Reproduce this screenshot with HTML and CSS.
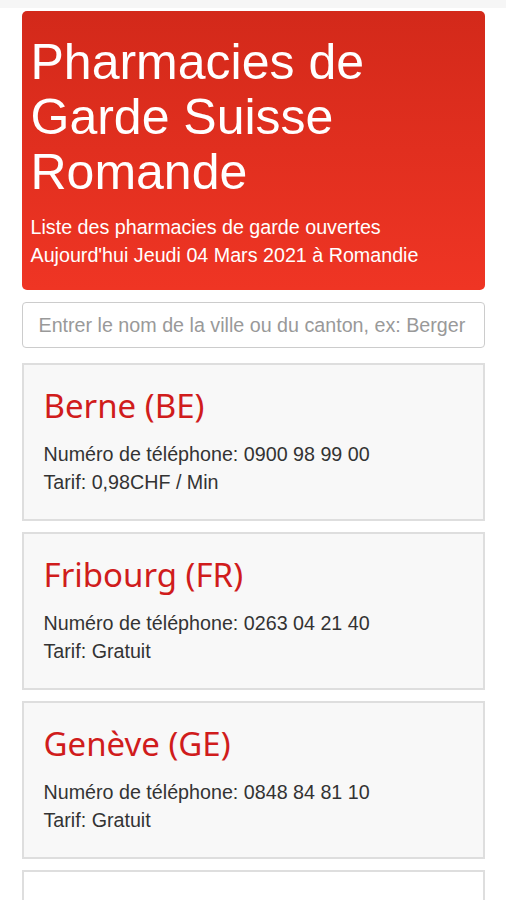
FILE: index.html
```html
<!DOCTYPE html>
<html lang="fr">
<head>
  <meta charset="UTF-8" />
  <meta name="viewport" content="width=device-width, initial-scale=1.0"/>
  <title>Pharmacies de Garde Suisse Romande</title>
  <link rel="stylesheet" href="styles.css">
</head>
<body>
<div class="topbar"></div>

<div class="container">
  <header class="jumbo">
    <h1>Pharmacies de Garde Suisse Romande</h1>
    <p>Liste des pharmacies de garde ouvertes Aujourd'hui Jeudi 04 Mars 2021 à Romandie</p>
  </header>

  <input class="search" type="text" placeholder="Entrer le nom de la ville ou du canton, ex: Berger">

  <div class="liste">
    <div class="canton">
      <h2>Berne (BE)</h2>
      <p>Numéro de téléphone: 0900 98 99 00</p>
      <p>Tarif: 0,98CHF / Min</p>
    </div>
    <div class="canton">
      <h2>Fribourg (FR)</h2>
      <p>Numéro de téléphone: 0263 04 21 40</p>
      <p>Tarif: Gratuit</p>
    </div>
    <div class="canton">
      <h2>Genève (GE)</h2>
      <p>Numéro de téléphone: 0848 84 81 10</p>
      <p>Tarif: Gratuit</p>
    </div>
    <div class="canton vide">
      <h2>Jura (JU)</h2>
      <p>Numéro de téléphone: 0848 80 80 80</p>
      <p>Tarif: Gratuit</p>
    </div>
  </div>
</div>
</body>
</html>
```

FILE: styles.css
```css
* {
  margin: 0;
  padding: 0;
  box-sizing: border-box;
}

body {
  font-family: "Liberation Sans", Arial, sans-serif;
  font-size: 19.7px;
  line-height: 28px;
  color: #333;
  background: #fff;
}

.topbar {
  height: 8px;
  background: #f6f6f6;
}

.container {
  width: 463px;
  margin: 3px auto 0;
}

.jumbo {
  background: linear-gradient(to bottom, #d3291a, #ef3524);
  border-radius: 5px;
  padding: 24px 9px 21px;
  color: #fff;
}

.jumbo h1 {
  font-weight: normal;
  font-size: 50px;
  line-height: 55px;
  margin-bottom: 13px;
}

.jumbo p {
  font-size: 19.7px;
  line-height: 28px;
}

.search {
  display: block;
  width: 100%;
  height: 46px;
  margin-top: 12px;
  padding: 0 16px;
  border: 1px solid #ccc;
  border-radius: 4px;
  font-family: inherit;
  font-size: 19.7px;
  color: #555;
}

.search::placeholder {
  color: #999;
}

.liste {
  display: flex;
  flex-direction: column;
  gap: 11px;
  margin-top: 15px;
}

.canton {
  background: #f8f8f8;
  border: 2px solid #dedede;
  padding: 23px 20px;
  height: 158px;
}

.canton.vide {
  background: #fff;
}

.canton h2 {
  font-family: "Noto Sans", sans-serif;
  font-weight: normal;
  font-size: 33px;
  line-height: 35px;
  color: #d01c1c;
  margin-bottom: 17px;
}
```
